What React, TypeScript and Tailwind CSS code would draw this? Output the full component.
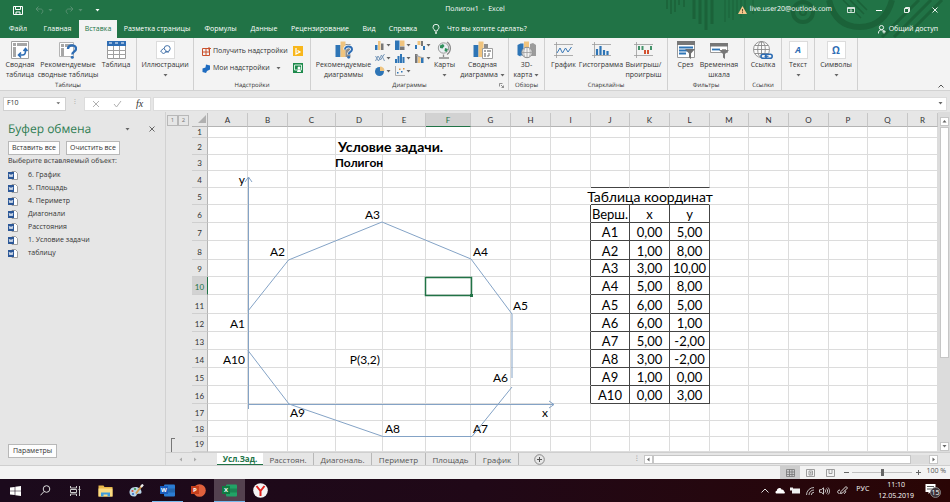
import type { ReactNode } from 'react';
import clsx from 'clsx';

const COLUMNS = [
  { name: 'A', width: 'w-[40px]' },
  { name: 'B', width: 'w-[40px]' },
  { name: 'C', width: 'w-[48px]' },
  { name: 'D', width: 'w-[47px]' },
  { name: 'E', width: 'w-[43px]' },
  { name: 'F', width: 'w-[45px]' },
  { name: 'G', width: 'w-[40px]' },
  { name: 'H', width: 'w-[40px]' },
  { name: 'I', width: 'w-[40px]' },
  { name: 'J', width: 'w-[39px]' },
  { name: 'K', width: 'w-[40px]' },
  { name: 'L', width: 'w-[40px]' },
  { name: 'M', width: 'w-[39px]' },
  { name: 'N', width: 'w-[40px]' },
  { name: 'O', width: 'w-[40px]' },
  { name: 'P', width: 'w-[39px]' },
  { name: 'Q', width: 'w-[40px]' },
  { name: 'R', width: '' },
];

const ROW_HEIGHTS = [
  'h-[11px]',
  'h-[17px]',
  'h-[16px]',
  'h-[17px]',
  'h-[17px]',
  'h-[18px]',
  'h-[18px]',
  'h-[19px]',
  'h-[17px]',
  'h-[18px]',
  'h-[19px]',
  'h-[18px]',
  'h-[18px]',
  'h-[18px]',
  'h-[18px]',
  'h-[18px]',
  'h-[17px]',
  'h-[16px]',
  'h-[15px]',
];

interface Cell {
  text: string;
  align?: 'left' | 'right' | 'center';
  span?: number;
  bold?: boolean;
  size?: string;
}

const cells: Record<string, Cell> = {
  D2: { text: 'Условие задачи.', align: 'left', span: 3, bold: true, size: 'text-[14px]' },
  D3: { text: 'Полигон', align: 'center', bold: true },
  A4: { text: 'y', align: 'right' },
  D6: { text: 'A3', align: 'right' },
  B8: { text: 'A2', align: 'right' },
  G8: { text: 'A4', align: 'left' },
  H11: { text: 'A5', align: 'left' },
  A12: { text: 'A1', align: 'right' },
  A14: { text: 'A10', align: 'right' },
  D14: { text: 'P(3,2)', align: 'right' },
  G15: { text: 'A6', align: 'right' },
  C17: { text: 'A9', align: 'left' },
  H17: { text: 'x', align: 'right' },
  E18: { text: 'A8', align: 'left' },
  G18: { text: 'A7', align: 'left' },
  J5: { text: 'Таблица координат', align: 'center', span: 3, size: 'text-[14px]' },
};

const vertices = [
  ['Верш.', 'x', 'y'],
  ['A1', '0,00', '5,00'],
  ['A2', '1,00', '8,00'],
  ['A3', '3,00', '10,00'],
  ['A4', '5,00', '8,00'],
  ['A5', '6,00', '5,00'],
  ['A6', '6,00', '1,00'],
  ['A7', '5,00', '-2,00'],
  ['A8', '3,00', '-2,00'],
  ['A9', '1,00', '0,00'],
  ['A10', '0,00', '3,00'],
];

vertices.forEach((values, i) => {
  values.forEach((text, j) => {
    cells[`${'JKL'[j]}${i + 6}`] = { text, align: 'center', size: 'text-[13px]' };
  });
});

const ribbonTabs = [
  { label: 'Файл', width: 'w-[36px]' },
  { label: 'Главная', width: 'w-[43px]' },
  { label: 'Вставка', width: 'w-[38px]' },
  { label: 'Разметка страницы', width: 'w-[80px]' },
  { label: 'Формулы', width: 'w-[47px]' },
  { label: 'Данные', width: 'w-[40px]' },
  { label: 'Рецензирование', width: 'w-[72px]' },
  { label: 'Вид', width: 'w-[26px]' },
  { label: 'Справка', width: 'w-[42px]' },
];

const sheetTabs = [
  { label: 'Усл.Зад.', width: 'w-[46px]' },
  { label: 'Расстоян.', width: 'w-[51px]' },
  { label: 'Диагональ.', width: 'w-[58px]' },
  { label: 'Периметр', width: 'w-[54px]' },
  { label: 'Площадь', width: 'w-[50px]' },
  { label: 'График', width: 'w-[43px]' },
];

const clipboardItems = [
  '6. График',
  '5. Площадь',
  '4. Периметр',
  'Диагонали',
  'Расстояния',
  '1. Условие задачи',
  'таблицу',
];

const Caret = ({ className = 'text-[#666]' }: { className?: string }) => (
  <svg width="5" height="3" viewBox="0 0 5 3" className={className}>
    <path d="M0.5 0h4L2.5 2.4z" fill="currentColor" />
  </svg>
);

/* ---------- Title bar ---------- */

const TitleDecor = () => (
  <svg
    className="absolute right-0 top-0 pointer-events-none"
    width="300"
    height="38"
    viewBox="0 0 300 38"
    fill="none"
    stroke="#1b6239"
  >
    <path
      d="M17 0v9M21 0v14M25 0v12M29 0v5M34 0v7"
      strokeWidth="1.5"
    />
    <path d="M44 0v19M50 0v24M56 0v30M62 0v24" strokeWidth="3" />
    <path d="M75 0v22M79 0v18M83 0v20M87 0v14M91 0v18M95 0v12M103 0v14" />
    <circle cx="153" cy="12" r="10" strokeWidth="4" />
    <circle cx="153" cy="12" r="3" strokeWidth="2" />
    <path d="M179 0c4 17 14 27 31 27s28-11 32-27" strokeWidth="6" />
    <path d="M193 0l18 18M200 0l14 14M207 0l10 10" strokeWidth="1.5" />
    <path d="M232 37L269 0M244 37L281 0M262 30L292 0" strokeWidth="3" />
  </svg>
);

const TitleBar = () => (
  <div className="relative grid grid-cols-[1fr_auto_1fr] items-center h-5 text-[7px] text-white">
    <div className="flex items-center gap-3 pl-[13px]">
      <button type="button" aria-label="Сохранить">
        <svg width="10" height="9" viewBox="0 0 10 9">
          <path
            d="M0.5 0.5h9v8h-9z M2.5 0.5v3h5v-3 M3 8.5V6h4v2.5"
            fill="none"
            stroke="#fff"
          />
        </svg>
      </button>
      <button type="button" aria-label="Отменить" className="flex items-center gap-1 text-[#579071]">
        <svg width="9" height="8" viewBox="0 0 9 8" fill="none" stroke="currentColor">
          <path d="M3.5 0.5L1 3l2.5 2.5M1 3h4.500c3 0 3 4 0.500 4.500" />
        </svg>
        <Caret className="text-[#579071]" />
      </button>
      <button type="button" aria-label="Вернуть" className="flex items-center gap-1 text-[#579071]">
        <svg width="9" height="8" viewBox="0 0 9 8" fill="none" stroke="currentColor">
          <path d="M5.500 0.500L8 3 5.500 5.500M8 3H3.500c-3 0-3 4-0.500 4.500" />
        </svg>
        <Caret className="text-[#579071]" />
      </button>
      <button type="button" aria-label="Настройка панели быстрого доступа">
        <Caret className="text-white" />
      </button>
    </div>
    <h1 className="whitespace-pre">Полигон1  -  Excel</h1>
    <div className="flex items-center justify-end pr-[1px]">
      <svg width="9" height="8" viewBox="0 0 9 8">
        <path d="M4.500 0L9 8H0z" fill="#f5c68a" />
        <path d="M4.500 3v2.500M4.500 6.200v1" stroke="#5b4a2c" />
      </svg>
      <span className="ml-[3px] mr-3">live.user20@outlook.com</span>
      {/* Window controls */}
      <button type="button" aria-label="Параметры отображения ленты" className="flex justify-center w-[14px]">
        <svg width="8" height="6" viewBox="0 0 8 6" fill="none" stroke="#fff">
          <path d="M0.500 0.500h7v5h-7zM0.500 1.500h7M4 5V3M3 3.500l1-1 1 1" strokeWidth="0.8" />
        </svg>
      </button>
      <button type="button" aria-label="Свернуть" className="flex justify-center ml-[7px] w-7">
        <svg width="6" height="6" viewBox="0 0 6 6">
          <path d="M0 3.500h6" stroke="#fff" />
        </svg>
      </button>
      <button type="button" aria-label="Восстановить" className="flex justify-center w-7">
        <svg width="6" height="6" viewBox="0 0 6 6" fill="none" stroke="#fff" strokeWidth="0.9">
          <path d="M0.500 1.500h4v4h-4zM1.500 1.500v-1h4v4h-1" />
        </svg>
      </button>
      <button type="button" aria-label="Закрыть" className="flex justify-center w-7">
        <svg width="6" height="6" viewBox="0 0 6 6" stroke="#fff" strokeWidth="0.9">
          <path d="M0.500 0.500l5 5M5.500 0.500l-5 5" />
        </svg>
      </button>
    </div>
  </div>
);

const RibbonTabs = () => (
  <nav className="relative flex items-stretch h-[18px] text-[7px] text-white">
    {ribbonTabs.map(({ label, width }) => (
      <button
        key={label}
        type="button"
        className={clsx(
          'shrink-0 whitespace-nowrap',
          width,
          label === 'Вставка' && 'bg-[#f3f3f3] text-[#217346]'
        )}
      >
        {label}
      </button>
    ))}
    <button type="button" className="flex items-center gap-[7px] ml-2 whitespace-nowrap">
      <svg width="8" height="10" viewBox="0 0 8 10" fill="none" stroke="#fff" strokeWidth="0.9">
        <path d="M2.800 7C2.800 5.500 1 5 1 3.300a3 3 0 0 1 6 0C7 5 5.200 5.500 5.200 7zM3 8.300h2M3.300 9.500h1.400" />
      </svg>
      Что вы хотите сделать?
    </button>
    <button type="button" className="flex items-center gap-[3px] ml-auto pr-3 whitespace-nowrap">
      <svg width="8" height="9" viewBox="0 0 8 9" fill="none" stroke="#fff" strokeWidth="0.9">
        <circle cx="3.500" cy="2.600" r="2.100" />
        <path d="M0.400 8.500c0-2.500 1.200-3.600 3.100-3.600 1 0 1.600.2 2 .6M6 5v3.500M4.300 6.800h3.500" />
      </svg>
      Общий доступ
    </button>
  </nav>
);

/* ---------- Ribbon icons ---------- */

const PivotTableIcon = () => (
  <svg width="18" height="18" viewBox="0 0 18 18" fill="none">
    <path d="M0.500 0.500h17v17h-17z" fill="#fff" stroke="#a0a0a0" />
    <path d="M2 2h3v3H2zM6 2h10v3H6zM2 6h3v10H2z" fill="#a6a6a6" />
    <path d="M8 14h3.500c2 0 3-1.500 3-4V8M12.500 10l2-2.500 2 2.500M10 11.500L7.500 14 10 16.500" stroke="#2e6db4" strokeWidth="1.600" />
  </svg>
);

const RecommendedPivotIcon = () => (
  <svg width="18" height="18" viewBox="0 0 18 18" fill="none">
    <path d="M0.500 1.500h14v14h-14z" fill="#fff" stroke="#b4b4b4" />
    <path d="M2 3h3v3H2zM6 3h8v3H6zM2 7h3v8H2z" fill="#a6a6a6" />
    <path d="M9 8c0-5 8-4.500 8-0.300 0 3-3.700 2.800-3.700 5.800" stroke="#2e6db4" strokeWidth="2.400" />
    <circle cx="13.300" cy="16.300" r="1.500" fill="#2e6db4" />
  </svg>
);

const TableIcon = () => (
  <svg width="19" height="18" viewBox="0 0 19 18" fill="none">
    <path d="M0.500 0.500h18v17h-18z" fill="#fff" stroke="#9a9a9a" />
    <path d="M0 0h19v5H0z" fill="#2e6db4" />
    <path d="M2 2h3M8 2h3M14 2h3" stroke="#fff" />
    <path d="M0 9.500h19M0 13.500h19M6.500 5v13M12.500 5v13" stroke="#a0a0a0" />
  </svg>
);

const ShapesIcon = () => (
  <svg width="11" height="11" viewBox="0 0 11 11" fill="#fff" stroke="#4472a8">
    <circle cx="7.200" cy="3.600" r="3" />
    <path d="M3.500 3.500L6.500 6 3.500 9 0.600 6zM5 7h4" fill="#f8fbff" />
  </svg>
);

const QuestionChartIcon = () => (
  <svg width="18" height="18" viewBox="0 0 18 18" fill="none">
    <path d="M0.500 4h5v12h-5z" fill="#2e75b6" />
    <path d="M5.500 0.500h5v15.500h-5z" fill="#f0c47e" />
    <path d="M10.500 3h5v13h-5z" fill="#8d8d8d" />
    <path d="M10 8.500c0-4 7-3.800 7 0 0 2.500-3.300 2.300-3.300 5" stroke="#fff" strokeWidth="3.500" />
    <path d="M10 8.500c0-4 7-3.800 7 0 0 2.500-3.300 2.300-3.300 5" stroke="#2e6db4" strokeWidth="2" />
    <circle cx="13.700" cy="16.300" r="1.400" fill="#2e6db4" />
  </svg>
);

const GlobeStandIcon = () => (
  <svg width="15" height="18" viewBox="0 0 15 18" fill="none">
    <circle cx="6.500" cy="7" r="5.200" fill="#e9eef2" stroke="#9a9a9a" />
    <path d="M3 4.500l3-1.500 1.500 2-2 2.500-2.500-.5zM8 7l3 1-1.500 3-2-1z" fill="#2f8f5b" />
    <path d="M10 1c4.500 3 4.500 9.500 0 12.500M6.500 13.500V16M2 17h10" stroke="#8a8a8a" strokeWidth="1.300" />
  </svg>
);

const PivotChartIcon = () => (
  <svg width="20" height="18" viewBox="0 0 20 18" fill="none">
    <path d="M0.500 4h5v12h-5z" fill="#2e75b6" />
    <path d="M5.500 0.500h5v15.500h-5z" fill="#f0c47e" />
    <path d="M11 3h4v7h-4z" fill="#8d8d8d" />
    <path d="M9.500 7.500h10v10h-10z" fill="#fff" stroke="#a0a0a0" />
    <path d="M11 9h2v2h-2zM14 9h4v2h-4zM11 12h2v4h-2z" fill="#a6a6a6" />
    <path d="M14 15h2v-3" stroke="#777" />
  </svg>
);

const Map3dIcon = () => (
  <svg width="19" height="18" viewBox="0 0 19 18" fill="none">
    <path d="M0.500 4l3-1.500v13L0.500 14zM3.500 2.500h3v12h-3z" fill="#2e75b6" />
    <path d="M7 0.500h5v14H7z" fill="#f0c47e" />
    <path d="M13 3l3-1 3 2v11h-6z" fill="#9c9c9c" />
    <circle cx="10" cy="11.500" r="5.200" fill="#f3f3f3" stroke="#8d8d8d" />
    <path d="M5 11.500h10M10 6.500v10M7.500 7.500c-1 3-1 5 0 8M12.500 7.500c1 3 1 5 0 8" stroke="#9c9c9c" strokeWidth="0.800" />
  </svg>
);

const SparkLineIcon = () => (
  <svg width="19" height="16" viewBox="0 0 19 16" fill="none">
    <path d="M0 2.500h19M0 13.500h19M2.500 0v16" stroke="#9a9a9a" strokeWidth="0.800" />
    <path d="M3 11l3-5 2.500 5 3-5 2.500 4 3.500-5" stroke="#3b79b7" />
  </svg>
);

const SparkColumnIcon = () => (
  <svg width="19" height="16" viewBox="0 0 19 16" fill="none">
    <path d="M0 2.500h19M0 13.500h19M2.500 0v16" stroke="#9a9a9a" strokeWidth="0.800" />
    <path d="M5 13V7M8.500 13V4M12 13V8M15.500 13V9" stroke="#2e75b6" strokeWidth="2.200" />
  </svg>
);

const SparkWinIcon = () => (
  <svg width="19" height="16" viewBox="0 0 19 16" fill="none">
    <path d="M0 2.500h19M0 13.500h19M2.500 0v16" stroke="#9a9a9a" strokeWidth="0.800" />
    <path d="M5 8V4M8.500 8V4M17 8V4" stroke="#43936a" strokeWidth="2" />
    <path d="M11 12V8M14 12V8" stroke="#d35230" strokeWidth="2" />
  </svg>
);

const SlicerIcon = () => (
  <svg width="18" height="18" viewBox="0 0 18 18" fill="none">
    <path d="M0.500 0.500h17v16h-17z" fill="#fff" stroke="#9a9a9a" />
    <path d="M0 0h18v4H0z" fill="#777" />
    <path d="M2 6.500h14M2 9.500h10M2 12.500h7" stroke="#2e75b6" strokeWidth="1.800" />
    <path d="M8 8h10l-4 4.500V18l-2-1.500v-4z" fill="#6f6f6f" />
  </svg>
);

const TimelineIcon = () => (
  <svg width="19" height="18" viewBox="0 0 19 18" fill="none">
    <path d="M0.500 3.500h17v8h-17z" fill="#fff" stroke="#9a9a9a" />
    <path d="M0 2h18v3.500H0z" fill="#777" />
    <path d="M2 8.500h8" stroke="#2e75b6" strokeWidth="1.800" />
    <path d="M12 8.500h4" stroke="#a0a0a0" />
    <path d="M9 9h10l-4 4v5l-2-1.500V13z" fill="#777" />
  </svg>
);

const LinkIcon = () => (
  <svg width="20" height="19" viewBox="0 0 20 19" fill="none">
    <g stroke="#8a8a8a" strokeWidth="0.900">
      <circle cx="8.500" cy="8.500" r="8" fill="#fbfbfb" />
      <ellipse cx="8.500" cy="8.500" rx="3.800" ry="8" />
      <path d="M0.500 8.500h16M8.500 0.500v16M1.700 4.500h13.600M1.700 12.500h13.600" />
    </g>
    <g stroke="#2e6db4" strokeWidth="1.600" fill="#f3f3f3">
      <rect x="8" y="13.300" width="6.500" height="4" rx="2" />
      <rect x="12.700" y="13.300" width="6.500" height="4" rx="2" />
    </g>
    <path d="M11.500 15.300h4" stroke="#2e6db4" strokeWidth="1.200" />
  </svg>
);

const BoxedIcon = ({ children }: { children: ReactNode }) => (
  <span className="flex items-center justify-center w-[19px] h-[18px] bg-white border border-[#dcdcdc] text-[#2e6db4]">
    {children}
  </span>
);

/* Small chart buttons, one svg body per chart type */
const miniCharts = [
  {
    name: 'Гистограмма',
    art: (
      <>
        <path d="M0 5h2.500v5H0z" fill="#2e75b6" />
        <path d="M3 1h2.500v9H3z" fill="#f0c47e" />
        <path d="M6 3.500h2.500V10H6z" fill="#777" />
      </>
    ),
  },
  {
    name: 'Иерархическая',
    art: (
      <>
        <path d="M0 0.500h4.500V10H0z" fill="#2e75b6" />
        <path d="M5 0.500h4.500V6H5z" fill="#f0c47e" />
        <path d="M5 6.500h4.500V10H5z" fill="#777" />
      </>
    ),
  },
  {
    name: 'Каскадная',
    art: (
      <>
        <path d="M0 5h2v4H0zM8 6h2v4H8z" fill="#2e75b6" />
        <path d="M2.500 1h3v4h-3z" fill="#f0c47e" />
        <path d="M6 1h2v5H6z" fill="#777" />
      </>
    ),
  },
  {
    name: 'График',
    art: (
      <path
        d="M0.500 8L3 3l2.500 4L9.500 1M0.500 3l3 5 3-6 3 6"
        fill="none"
        stroke="#6b8fb3"
        strokeWidth="0.900"
      />
    ),
  },
  {
    name: 'Статистическая',
    art: <path d="M0 6h2v4H0zM2.500 3h2v7h-2zM5 1h2v9H5zM7.500 4h2v6h-2z" fill="#2e75b6" />,
  },
  {
    name: 'Комбинированная',
    art: (
      <>
        <path d="M0 1h2.500v9H0z" fill="#777" />
        <path d="M3 4h2.500v6H3z" fill="#f0c47e" />
        <path d="M6 5h2.500v5H6z" fill="#2e75b6" />
        <path d="M1 2l4 2 4 1" stroke="#999" fill="none" />
      </>
    ),
  },
  {
    name: 'Круговая',
    art: (
      <>
        <circle cx="4.500" cy="5.500" r="4.500" fill="#2e75b6" />
        <path d="M5 5V0.500A4.500 4.500 0 0 1 9.500 5z" fill="#f0c47e" />
      </>
    ),
  },
  {
    name: 'Точечная',
    art: (
      <>
        <path d="M0.500 0v9.500H10" stroke="#999" fill="none" strokeWidth="0.800" />
        <path d="M2 6h1.500v1.500H2zM6 5h1.500v1.500H6z" fill="#2e75b6" />
        <path d="M4 2.500h1.500V4H4zM8 2h1.500v1.500H8z" fill="#e0963b" />
      </>
    ),
  },
];

/* ---------- Ribbon ---------- */

interface RibbonItemProps {
  icon: ReactNode;
  lines: string[];
  width: string;
  menu?: boolean;
}

// With `menu`, a caret follows the last of two lines or sits under a single one
const RibbonItem = ({ icon, lines, width, menu }: RibbonItemProps) => (
  <button
    type="button"
    className={clsx('flex flex-col items-center shrink-0 leading-[10px] whitespace-nowrap', width)}
  >
    <span className="flex items-center justify-center h-5">{icon}</span>
    {lines.map((line, i) => (
      <span key={line} className="flex items-center gap-[2px]">
        {line}
        {menu && i === 1 && <Caret />}
      </span>
    ))}
    {menu && lines.length === 1 && (
      <span className="flex items-center h-[10px]">
        <Caret />
      </span>
    )}
  </button>
);

interface RibbonGroupProps {
  title?: string;
  width: string;
  launcher?: boolean;
  children: ReactNode;
}

const RibbonGroup = ({ title, width, launcher, children }: RibbonGroupProps) => (
  <section
    className={clsx('flex flex-col shrink-0 justify-between border-r border-[#d0d0d0] pt-0.5', width)}
  >
    <div className="flex justify-center">{children}</div>
    <div className="relative text-center text-[6px] leading-[10px]">
      {title}
      {launcher && (
        <button type="button" aria-label="Все диаграммы" className="absolute right-1 bottom-[2px]">
          <svg width="5" height="5" viewBox="0 0 5 5" fill="none" stroke="#777" strokeWidth="0.800">
            <path d="M0.500 3.500v-3h3M2 2l2.500 2.500M4.500 2.500v2h-2" />
          </svg>
        </button>
      )}
    </div>
  </section>
);

const Ribbon = () => (
  <div className="flex h-[52px] bg-[#f3f3f3] text-[7px] text-[#333] overflow-hidden">
    <RibbonGroup title="Таблицы" width="w-[137px]">
      <RibbonItem icon={<PivotTableIcon />} lines={['Сводная', 'таблица']} width="w-[34px]" />
      <RibbonItem
        icon={<RecommendedPivotIcon />}
        lines={['Рекомендуемые', 'сводные таблицы']}
        width="w-[62px]"
      />
      <RibbonItem icon={<TableIcon />} lines={['Таблица']} width="w-[34px]" />
    </RibbonGroup>
    <RibbonGroup width="w-[57px]">
      <RibbonItem
        icon={
          <BoxedIcon>
            <ShapesIcon />
          </BoxedIcon>
        }
        lines={['Иллюстрации']}
        width="w-[55px]"
        menu
      />
    </RibbonGroup>
    <RibbonGroup title="Надстройки" width="w-[117px]">
      <div className="flex flex-col w-full gap-[5px] pt-[5px] pl-2 pr-[7px]">
        <div className="flex items-center justify-between h-3">
          <button type="button" className="flex items-center gap-[2px] whitespace-nowrap">
            <svg width="9" height="9" viewBox="0 0 9 9" fill="none" stroke="#c9512c">
              <path d="M0.500 1.500h7v7h-7zM4 1.500v7M0.500 5h7M7 0v3.500M5.500 1.500h3.500" />
            </svg>
            Получить надстройки
          </button>
          <button type="button" aria-label="Карты Bing">
            <svg width="10" height="10" viewBox="0 0 10 10">
              <path d="M0 0h10v10H0z" fill="#f8b71c" />
              <path d="M3 2v6l4-2-2.500-1.500" fill="none" stroke="#fff" strokeWidth="1.200" />
            </svg>
          </button>
        </div>
        <div className="flex items-center justify-between h-3">
          <button type="button" className="flex items-center gap-[2px] whitespace-nowrap">
            <svg width="9" height="9" viewBox="0 0 9 9" fill="#1f6cc0">
              <path d="M4 0.500l4 1v4L5 7 4 9 0.500 8V4.500l3-1z" />
            </svg>
            Мои надстройки
            <span className="pl-1">
              <Caret />
            </span>
          </button>
          <button type="button" aria-label="Диаграмма людей">
            <svg width="10" height="10" viewBox="0 0 10 10">
              <path d="M0 0h10v10H0z" fill="#1e8a4c" />
              <path d="M1.500 2h7v5h-7z" fill="none" stroke="#d6efe0" />
              <circle cx="6" cy="5" r="1.500" fill="#fff" />
              <path d="M4 9c0-3 4-3 4 0" fill="#fff" />
            </svg>
          </button>
        </div>
      </div>
    </RibbonGroup>
    <RibbonGroup title="Диаграммы" width="w-[198px]" launcher>
      <RibbonItem
        icon={<QuestionChartIcon />}
        lines={['Рекомендуемые', 'диаграммы']}
        width="w-[62px]"
      />
      <div className="grid grid-cols-3 gap-x-1 gap-y-[2px] content-start">
        {miniCharts.map(({ name, art }) => (
          <button key={name} type="button" aria-label={name} className="flex items-center gap-px w-4">
            <svg width="10" height="11" viewBox="0 0 10 11" className="shrink-0">
              {art}
            </svg>
            <Caret />
          </button>
        ))}
      </div>
      <RibbonItem icon={<GlobeStandIcon />} lines={['Карты']} width="w-[28px]" menu />
      <RibbonItem icon={<PivotChartIcon />} lines={['Сводная', 'диаграмма']} width="w-[48px]" menu />
    </RibbonGroup>
    <RibbonGroup title="Обзоры" width="w-[36px]">
      <RibbonItem icon={<Map3dIcon />} lines={['3D-', 'карта']} width="w-[34px]" menu />
    </RibbonGroup>
    <RibbonGroup title="Спарклайны" width="w-[123px]">
      <RibbonItem icon={<SparkLineIcon />} lines={['График']} width="w-[28px]" />
      <RibbonItem icon={<SparkColumnIcon />} lines={['Гистограмма']} width="w-[47px]" />
      <RibbonItem icon={<SparkWinIcon />} lines={['Выигрыш/', 'проигрыш']} width="w-[38px]" />
    </RibbonGroup>
    <RibbonGroup title="Фильтры" width="w-[77px]">
      <RibbonItem icon={<SlicerIcon />} lines={['Срез']} width="w-[26px]" />
      <RibbonItem icon={<TimelineIcon />} lines={['Временная', 'шкала']} width="w-[41px]" />
    </RibbonGroup>
    <RibbonGroup title="Ссылки" width="w-[37px]">
      <RibbonItem icon={<LinkIcon />} lines={['Ссылка']} width="w-[36px]" />
    </RibbonGroup>
    <RibbonGroup width="w-[33px]">
      <RibbonItem
        icon={
          <BoxedIcon>
            <span className="text-[9px] font-bold italic">A</span>
          </BoxedIcon>
        }
        lines={['Текст']}
        width="w-[32px]"
        menu
      />
    </RibbonGroup>
    <RibbonGroup width="w-[43px]">
      <RibbonItem
        icon={
          <BoxedIcon>
            <span className="text-[10px] font-bold">Ω</span>
          </BoxedIcon>
        }
        lines={['Символы']}
        width="w-[42px]"
        menu
      />
    </RibbonGroup>
    <button type="button" aria-label="Свернуть ленту" className="self-end ml-auto pr-[6px] pb-[2px]">
      <svg width="6" height="4" viewBox="0 0 6 4" fill="none" stroke="#555">
        <path d="M0.500 3.500L3 1l2.500 2.500" />
      </svg>
    </button>
  </div>
);

const FormulaBar = () => (
  <div className="flex items-center h-[22px] pt-1 pl-[3px] pr-[3px] text-[7px] text-[#333] border-t border-[#d2d2d2]">
    <div className="flex items-center w-[63px] h-[14px] border border-[#d0d0d0] bg-white pr-1">
      <input
        aria-label="Имя"
        defaultValue="F10"
        className="w-full min-w-0 pl-[3px] outline-none"
      />
      <Caret />
    </div>
    <span className="flex items-center justify-center w-[18px] h-[14px] text-[#999]">⁝</span>
    <div className="flex items-center justify-around w-[67px] h-[14px] border border-[#dcdcdc] bg-white">
      <button type="button" aria-label="Отмена">
        <svg width="8" height="8" viewBox="0 0 8 8" stroke="#b0b0b0">
          <path d="M1 1l6 6M7 1L1 7" />
        </svg>
      </button>
      <button type="button" aria-label="Ввод">
        <svg width="9" height="8" viewBox="0 0 9 8" fill="none" stroke="#b0b0b0">
          <path d="M1 4l2.500 3L8 1" />
        </svg>
      </button>
      <button
        type="button"
        className="font-['Liberation_Serif',serif] text-[10px] leading-none italic"
      >
        fx
      </button>
    </div>
    <div className="flex flex-1 items-center h-[14px] ml-[2px] border border-[#dcdcdc] bg-white pr-[3px]">
      <input aria-label="Строка формул" className="flex-1 min-w-0 outline-none" />
      <Caret />
    </div>
  </div>
);

/* ---------- Clipboard pane ---------- */

const paneButton = 'h-[14px] border border-[#b8b8b8] bg-[#fdfdfd] whitespace-nowrap';

const ClipboardPane = () => (
  <aside className="flex flex-col items-start shrink-0 w-[166px] pl-2 text-[7px] text-[#333] border-r border-[#d2d2d2]">
    <header className="flex items-center w-full h-[29px] pt-[5px] pr-[10px]">
      <h2 className="text-[12px] text-[#2f7d53] whitespace-nowrap">Буфер обмена</h2>
      <button type="button" aria-label="Параметры области" className="ml-auto mr-[19px]">
        <Caret />
      </button>
      <button type="button" aria-label="Закрыть область">
        <svg width="6" height="6" viewBox="0 0 6 6" stroke="#666">
          <path d="M0.500 0.500l5 5M5.500 0.500l-5 5" />
        </svg>
      </button>
    </header>
    <div className="flex gap-[6px]">
      <button type="button" className={clsx(paneButton, 'w-[52px]')}>
        Вставить все
      </button>
      <button type="button" className={clsx(paneButton, 'w-[54px]')}>
        Очистить все
      </button>
    </div>
    <p className="leading-[14px]">Выберите вставляемый объект:</p>
    <ul>
      {clipboardItems.map((item) => (
        <li key={item}>
          <button type="button" className="flex items-center gap-[10px] h-[13px] whitespace-nowrap">
            <svg width="10" height="9" viewBox="0 0 10 9">
              <path d="M4 0.500h3.500l2 2v6H4z" fill="#fff" stroke="#8a8a8a" strokeWidth="0.800" />
              <path d="M0 1h6v7H0z" fill="#2b5797" />
              <path d="M1.200 3l.8 3 1-2.500 1 2.500.8-3" fill="none" stroke="#fff" strokeWidth="0.800" />
            </svg>
            {item}
          </button>
        </li>
      ))}
    </ul>
    <button type="button" className={clsx(paneButton, 'w-[49px] mt-auto mb-[7px]')}>
      Параметры
    </button>
  </aside>
);

/* ---------- Worksheet ---------- */

const isCoordinateCell = (col: string, row: number) =>
  'JKL'.includes(col) && row >= 6 && row <= 16;

// Each cell paints only its right and bottom edge
const borderClasses = (col: string, row: number) => {
  const dark =
    isCoordinateCell(col, row) || (col === 'I' && row >= 6 && row <= 16);
  const darkBottom =
    isCoordinateCell(col, row) || ('JKL'.includes(col) && (row === 4 || row === 5));
  // The caption in J5 spills a little over both of its edges
  const hidden = 'IJ'.includes(col) && row === 5;
  return clsx(
    dark && 'border-r-[#444]',
    hidden && 'border-r-white',
    !dark && !hidden && 'border-r-[#dcdcdc]',
    darkBottom ? 'border-b-[#444]' : 'border-b-[#dcdcdc]'
  );
};

const SheetRow = ({ row }: { row: number }) => {
  let covered = 0;
  return (
    <tr className={ROW_HEIGHTS[row - 1]}>
      <th
        scope="row"
        className={clsx(
          'p-0 align-bottom text-[8px] font-normal border-r border-b border-b-[#cfcfcf]',
          row === 1 ? 'leading-[10px]' : 'leading-[13px]',
          row === 10
            ? 'bg-[#d2d2d2] text-[#217346] border-r-[#217346]'
            : 'text-[#333] border-r-[#b4b4b4]'
        )}
      >
        {row}
      </th>
      {COLUMNS.map(({ name }) => {
        if (covered > 0) {
          covered -= 1;
          return null;
        }
        const cell = cells[`${name}${row}`];
        covered = (cell?.span ?? 1) - 1;
        return (
          <td
            key={name}
            colSpan={cell?.span}
            className={clsx(
              'p-0 align-bottom border-r border-b bg-white',
              borderClasses(name, row)
            )}
          >
            {cell && (
              <div
                className={clsx(
                  'flex px-[2px] leading-[15px] whitespace-nowrap',
                  cell.size ?? 'text-[12px]',
                  cell.align === 'right' && 'justify-end',
                  cell.align === 'center' && 'justify-center',
                  cell.bold && 'font-bold'
                )}
              >
                {cell.text}
              </div>
            )}
          </td>
        );
      })}
    </tr>
  );
};

const Polygon = () => (
  <svg
    className="absolute left-0 top-0 pointer-events-none"
    width="380"
    height="340"
    viewBox="0 0 380 340"
    fill="none"
    stroke="#84a3c6"
  >
    <path d="M56.500 296V64M53 69l3.500-5 3.500 5" />
    <path d="M56 291.500h306M357 288l5 3.500-5 3.500" />
    <path d="M56 198L96.500 147 190 109 279 146 320 201V265" />
    <path d="M320 274L280 323.500H191L97 291 56 237.500" />
    {/* Cursor frame on F10 */}
    <path d="M233.500 164.500h46v18h-46z" stroke="#217346" strokeWidth="1.500" />
    <path d="M278 181h3v3h-3z" fill="#217346" stroke="none" />
  </svg>
);

const Worksheet = () => (
  <div className="flex flex-1 min-h-0">
    {/* Outline levels */}
    <div className="flex flex-col justify-between shrink-0 w-[26px] pl-[1px] pt-[3px] text-[6px] text-[#777]">
      <div className="flex">
        <button type="button" className="w-[11px] h-[11px] border border-[#b8b8b8]">
          1
        </button>
        <button type="button" className="w-[11px] h-[11px] border border-[#b8b8b8]">
          2
        </button>
      </div>
      <div className="ml-1 w-1 h-[14px] border-l border-t border-[#777]" />
    </div>
    <div className="relative flex-1 min-w-0 overflow-hidden pt-px font-['Lato','Noto_Sans',sans-serif] [text-rendering:auto] text-black">
      <div className="relative">
        <table className="table-fixed w-full border-separate border-spacing-0">
          <colgroup>
            <col className="w-[16px]" />
            {COLUMNS.map(({ name, width }) => (
              <col key={name} className={width} />
            ))}
          </colgroup>
          <thead>
            <tr className="h-[14px]">
              <th className="p-0 border-r border-b border-[#b4b4b4]">
                <svg className="ml-auto" width="10" height="9" viewBox="0 0 10 9">
                  <path d="M9 0v8H1z" fill="#b0b0b0" />
                </svg>
              </th>
              {COLUMNS.map(({ name }) => (
                <th
                  key={name}
                  scope="col"
                  className={clsx(
                    'p-0 text-[8px] leading-[10px] font-normal border-r border-b border-r-[#c6c6c6]',
                    name === 'F'
                      ? 'bg-[#d2d2d2] text-[#217346] border-b-[#217346]'
                      : 'text-[#333] border-b-[#b4b4b4]'
                  )}
                >
                  {name}
                </th>
              ))}
            </tr>
          </thead>
          <tbody>
            {ROW_HEIGHTS.map((_, i) => (
              <SheetRow key={i} row={i + 1} />
            ))}
          </tbody>
        </table>
        <Polygon />
      </div>
    </div>
    {/* Vertical scrollbar */}
    <div className="flex flex-col items-center shrink-0 w-3 bg-[#dcdcdc] py-px">
      <button type="button" aria-label="Вверх" className="flex items-center justify-center w-[9px] h-[9px] mt-1 bg-white border border-[#c6c6c6]">
        <svg width="5" height="3" viewBox="0 0 5 3">
          <path d="M0.500 2.500h4L2.500 0z" fill="#666" />
        </svg>
      </button>
      <div className="w-[9px] flex-1 mt-px mb-[84px] bg-white border border-[#c6c6c6]" />
      <button type="button" aria-label="Вниз" className="flex items-center justify-center w-[9px] h-[9px] bg-white border border-[#c6c6c6]">
        <Caret />
      </button>
    </div>
  </div>
);

const SheetTabs = () => (
  <div className="flex items-stretch h-[13px] text-[8px] text-[#555] border-t border-[#cfcfcf]">
    <div className="flex items-center shrink-0 gap-[10px] w-[51px] pl-[13px] text-[#aaa]">
      <svg width="4" height="5" viewBox="0 0 4 5" fill="currentColor">
        <path d="M3 0.500v4L0.500 2.500z" />
      </svg>
      <svg width="4" height="5" viewBox="0 0 4 5" fill="currentColor">
        <path d="M1 0.500v4L3.500 2.500z" />
      </svg>
    </div>
    {sheetTabs.map(({ label, width }, i) => (
      <button
        key={label}
        type="button"
        className={clsx(
          'shrink-0 leading-[11px] whitespace-nowrap',
          width,
          i === 0
            ? 'bg-white text-[#217346] font-bold border-b border-b-[#217346]'
            : 'border-r border-r-[#b8b8b8]'
        )}
      >
        {label}
      </button>
    ))}
    <button type="button" aria-label="Новый лист" className="ml-[15px]">
      <svg width="11" height="11" viewBox="0 0 11 11" fill="none" stroke="#888">
        <circle cx="5.500" cy="5.500" r="4.800" />
        <path d="M3 5.500h5M5.500 3v5" stroke="#555" />
      </svg>
    </button>
    <div className="flex items-center ml-auto pr-3">
      <span className="mr-[6px] text-[#999]">⁝</span>
      <button type="button" aria-label="Влево" className="flex items-center justify-center w-[9px] h-[9px] bg-white border border-[#c6c6c6]">
        <svg width="3" height="5" viewBox="0 0 3 5">
          <path d="M2.500 0.500v4L0 2.500z" fill="#666" />
        </svg>
      </button>
      <div className="w-[276px] h-[9px] bg-[#dcdcdc]">
        <div className="w-[258px] h-full bg-white border border-[#c6c6c6]" />
      </div>
      <button type="button" aria-label="Вправо" className="flex items-center justify-center w-[9px] h-[9px] bg-white border border-[#c6c6c6]">
        <svg width="3" height="5" viewBox="0 0 3 5">
          <path d="M0.500 0.500v4L3 2.500z" fill="#666" />
        </svg>
      </button>
    </div>
  </div>
);

const StatusBar = () => (
  <div className="flex items-center justify-end h-[14px] pr-1 bg-[#f3f3f3] border-t border-[#cfcfcf] text-[7px] text-[#555]">
    <button type="button" aria-label="Обычный" className="flex items-center justify-center w-5 h-full bg-[#cdcdcd]">
      <svg width="9" height="8" viewBox="0 0 9 8" fill="none" stroke="#777">
        <path d="M0.500 0.500h8v7h-8zM3.500 0.500v7M6 0.500v7M0.500 3h8M0.500 5.500h8" strokeWidth="0.800" />
      </svg>
    </button>
    <button type="button" aria-label="Разметка страницы" className="flex items-center justify-center w-5">
      <svg width="9" height="8" viewBox="0 0 9 8" fill="none" stroke="#888">
        <path d="M0.500 0.500h8v7h-8zM3 2h3.500v4H3zM4 3.500h1.500M4 4.800h1.500" strokeWidth="0.800" />
      </svg>
    </button>
    <button type="button" aria-label="Страничный режим" className="flex items-center justify-center w-5">
      <svg width="9" height="8" viewBox="0 0 9 8" fill="none" stroke="#888">
        <path d="M0.500 0.500h8v7h-8zM3 0.500v4h3v-4" strokeWidth="0.800" />
      </svg>
    </button>
    <button type="button" aria-label="Уменьшить" className="flex items-center justify-center w-3">
      <svg width="5" height="5" viewBox="0 0 5 5" stroke="#666">
        <path d="M0 2.500h5" />
      </svg>
    </button>
    <input
      type="range"
      aria-label="Масштаб"
      min={10}
      max={190}
      defaultValue={100}
      className="w-[60px] h-2 appearance-none bg-transparent [&::-webkit-slider-runnable-track]:h-px [&::-webkit-slider-runnable-track]:bg-[#c0c0c0] [&::-webkit-slider-thumb]:appearance-none [&::-webkit-slider-thumb]:w-[3px] [&::-webkit-slider-thumb]:h-[7px] [&::-webkit-slider-thumb]:mt-[-3px] [&::-webkit-slider-thumb]:bg-[#666]"
    />
    <button type="button" aria-label="Увеличить" className="flex items-center justify-center w-3">
      <svg width="5" height="5" viewBox="0 0 5 5" stroke="#666">
        <path d="M0 2.500h5M2.500 0v5" />
      </svg>
    </button>
    <span className="pl-[2px] whitespace-nowrap">100 %</span>
  </div>
);

/* ---------- Taskbar ---------- */

const officeApps = [
  { letter: 'W', body: 'fill-[#2b7cd3]', tag: 'bg-[#185abd]' },
  { letter: 'P', body: 'fill-[#e0603c]', tag: 'bg-[#c43e1c]' },
  { letter: 'X', body: 'fill-[#21a366]', tag: 'bg-[#107c41]' },
];

const Taskbar = () => (
  <footer className="flex items-stretch h-[23px] bg-linear-to-r from-[#1b0a1c] via-[#200817] to-[#2a0505] text-[7px] text-white">
    <button type="button" aria-label="Пуск" className="flex items-center justify-center w-[30px]">
      <svg width="11" height="10" viewBox="0 0 11 10" fill="#fff">
        <path d="M0 1.500L4.700 0.900v3.800H0zM5.300 0.800L11 0v4.700H5.300zM0 5.300h4.700v3.800L0 8.500zM5.300 5.300H11V10l-5.700-0.800z" />
      </svg>
    </button>
    <button type="button" aria-label="Поиск" className="flex items-center justify-center w-[30px]">
      <svg width="11" height="11" viewBox="0 0 11 11" fill="none" stroke="#ddd">
        <circle cx="6.500" cy="4" r="3.300" />
        <path d="M4 6.500L0.500 10.300" />
      </svg>
    </button>
    <button type="button" aria-label="Представление задач" className="flex items-center justify-center w-[30px]">
      <svg width="11" height="10" viewBox="0 0 11 10" fill="none" stroke="#ccc">
        <path d="M0.500 0v2h6V0M0.500 3.500h6v3h-6zM0.500 10V8h6v2M9.500 0v10M8.500 3.500h2" />
      </svg>
    </button>
    <button type="button" aria-label="Проводник" className="flex items-center justify-center w-[31px]">
      <svg width="15" height="12" viewBox="0 0 15 12">
        <path d="M0.500 0.500h5l1 1.500h8v9.500h-14z" fill="#e8b84a" />
        <path d="M0.500 3.500h14v8h-14z" fill="#fbdc82" />
        <path d="M3 11.500V7.500h9v4H9.500V9.500h-4v2z" fill="#3f9ddb" />
      </svg>
    </button>
    <button type="button" aria-label="Paint" className="flex items-center justify-center w-[31px]">
      <svg width="15" height="14" viewBox="0 0 15 14">
        <path d="M6.500 3C2 3 0.500 6 0.500 8.500S3 13 6 12.500c2-.3 1-2 2.500-2.500 2-.5 4 .5 4-2S10 3 6.500 3z" fill="#b9d3e6" />
        <circle cx="3.500" cy="7" r="1.100" fill="#d94f3a" />
        <circle cx="6" cy="5" r="1.100" fill="#3f9b4f" />
        <circle cx="4" cy="10" r="1.100" fill="#3b6fc4" />
        <path d="M7 9.500L13 1.500" stroke="#d59a4c" strokeWidth="1.800" />
        <path d="M12 3l2-2.500" stroke="#eee" strokeWidth="2.200" />
      </svg>
    </button>
    {officeApps.map(({ letter, body, tag }) => (
      <button
        key={letter}
        type="button"
        className={clsx(
          'relative flex items-center justify-center w-[31px] border-b',
          letter === 'X' && 'bg-[#54414f]',
          letter === 'P' ? 'border-transparent' : 'border-[#76b9ed]'
        )}
      >
        <svg width="15" height="13" viewBox="0 0 15 13" className={body}>
          {letter === 'P' ? (
            <circle cx="8.500" cy="6.500" r="6.300" />
          ) : (
            <>
              <rect x="4" y="0.500" width="11" height="12" rx="1" />
              <path d="M4 4.500h11v4H4z" fill="#000" opacity="0.180" />
            </>
          )}
        </svg>
        <span
          className={clsx(
            'absolute left-2 top-[7px] w-2 h-2 text-[6px] leading-[8px] font-bold',
            tag
          )}
        >
          {letter}
        </span>
      </button>
    ))}
    <button type="button" aria-label="Яндекс" className="flex items-center justify-center w-[31px]">
      <svg width="15" height="15" viewBox="0 0 15 15">
        <circle cx="7.500" cy="7.500" r="7.300" fill="#f4f4f4" />
        <path d="M3.500 3l4 5 4-5M7.500 7.500V13" fill="none" stroke="#e0201b" strokeWidth="2" />
      </svg>
    </button>
    {/* Tray */}
    <div className="flex items-center ml-auto pr-[9px]">
      <svg width="8" height="5" viewBox="0 0 8 5" fill="none" stroke="#ddd">
        <path d="M0.500 4.500L4 1l3.500 3.500" />
      </svg>
      <svg className="ml-[6px]" width="10" height="7" viewBox="0 0 10 7" fill="#fff">
        <path d="M2 6.500C0 6.500 0 4 1.800 3.800 2 1 5.500 0 6.500 2.500c2-.3 2.500 1 2.300 1.800 1.500.3 1.500 2.200 0 2.200z" />
      </svg>
      <svg className="ml-[5px]" width="10" height="7" viewBox="0 0 10 7">
        <path d="M2 1.500h8v5H2zM0 0.500h3v3H0z" fill="#f0f0f0" />
      </svg>
      <svg className="ml-[6px]" width="8" height="8" viewBox="0 0 8 8" fill="none" stroke="#ccc" strokeWidth="0.900">
        <path d="M0.500 8A7.500 7.500 0 0 1 8 0.500M3 8a5 5 0 0 1 5-5M5.300 8A2.700 2.700 0 0 1 8 5.300" />
      </svg>
      <svg className="ml-[5px]" width="11" height="8" viewBox="0 0 11 8" fill="none" stroke="#ddd" strokeWidth="0.900">
        <path d="M0.500 2.700h1.800L4.500 0.800v6.400L2.300 5.300H0.500zM6 2.500c.8 1 .8 2 0 3M7.500 1.500c1.500 1.800 1.500 3.500 0 5M9 0.500c2 2.500 2 5 0 7" />
      </svg>
      <svg className="ml-[7px]" width="11" height="9" viewBox="0 0 11 9" fill="none" stroke="#ddd">
        <path d="M4 5.500l5-5 1.500 1.500-5 5L3.500 7.500zM3 4c-3 0-3 3.500-.5 3.500M7 7.500c1.500-.5 2.500-1.500 1-3" />
      </svg>
      <span className="ml-2">РУС</span>
      <div className="flex flex-col items-center ml-[9px] leading-[11px]">
        <span>11:10</span>
        <span>12.05.2019</span>
      </div>
      <button type="button" aria-label="Уведомления: 15" className="ml-[11px]">
        <svg width="16" height="15" viewBox="0 0 16 15">
          <path d="M0.500 1h10v8H5.500L3.500 11V9h-3z" fill="#fff" />
          <path d="M2 3.500h7M2 6h5" stroke="#555" />
          <circle cx="10.500" cy="9.500" r="5" fill="#3b3036" stroke="#999" strokeWidth="0.800" />
          <text x="10.500" y="12" fontSize="7" fill="#fff" textAnchor="middle">
            15
          </text>
        </svg>
      </button>
    </div>
  </footer>
);

export default function App() {
  return (
    <div className="flex flex-col min-h-screen overflow-hidden bg-[#e6e6e6] font-['Open_Sans','Noto_Sans',sans-serif] [text-rendering:geometricPrecision]">
      <div className="relative bg-[#217346]">
        <TitleDecor />
        <TitleBar />
        <RibbonTabs />
      </div>
      <Ribbon />
      <FormulaBar />
      <main className="flex flex-1">
        <ClipboardPane />
        <div className="flex flex-col flex-1 min-w-0">
          <Worksheet />
          <SheetTabs />
        </div>
      </main>
      <StatusBar />
      <Taskbar />
    </div>
  );
}
